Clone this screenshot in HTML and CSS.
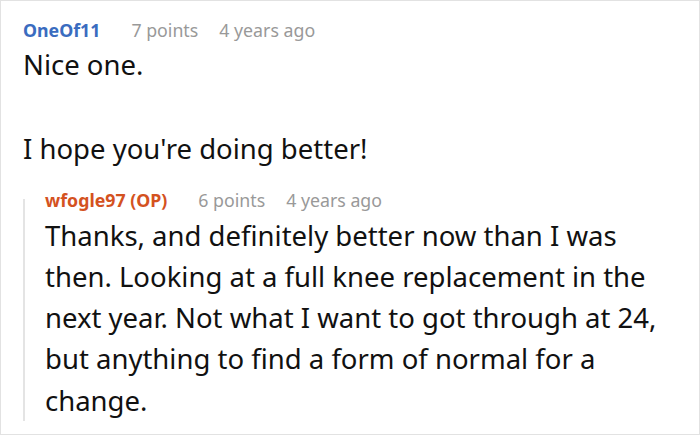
FILE: index.html
```html
<!DOCTYPE html>
<html>
<head>
<meta charset="utf-8">
<link rel="stylesheet" href="styles.css">
</head>
<body>
<div class="frame">
  <div class="comment">
    <div class="meta">
      <span class="user user-blue">OneOf11</span>
      <span class="points">7 points</span>
      <span class="time">4 years ago</span>
    </div>
    <div class="text">
      <p>Nice one.</p>
      <p>I hope you're doing better!</p>
    </div>
    <div class="reply">
      <div class="meta reply-meta">
        <span class="user user-orange">wfogle97 (OP)</span>
        <span class="points">6 points</span>
        <span class="time">4 years ago</span>
      </div>
      <div class="text reply-text">
        <p>Thanks, and definitely better now than I was then. Looking at a full knee replacement in the next year. Not what I want to got through at 24, but anything to find a form of normal for a change.</p>
      </div>
    </div>
  </div>
</div>
</body>
</html>
```
FILE: styles.css
```css
* { box-sizing: border-box; }
html, body { margin: 0; padding: 0; background: #fff; }
body { font-family: "Noto Sans", sans-serif; }
.frame {
  width: 700px;
  height: 435px;
  border: 1px solid #e2e2e2;
  overflow: hidden;
}
.comment { padding: 16px 14px 0 22px; }
.meta {
  display: flex;
  align-items: baseline;
  font-size: 17.75px;
  line-height: 26px;
  color: #999;
  margin-bottom: 1px;
}
.user { font-weight: 700; margin-right: 31px; }
.user-blue { color: #3a6cbf; }
.user-orange { color: #d4521f; }
.points { margin-right: 21px; }
.text { font-size: 27.5px; line-height: 41.25px; color: #111; }
.text p { margin: 0 0 43px 0; }
.text p:last-child { margin-bottom: 0; }
.reply {
  display: flow-root;
  border-left: 2px solid #e4e4e4;
  margin-top: 29px;
  padding-left: 20px;
}
.reply-meta { margin-top: -12px; margin-bottom: 2px; }
```
